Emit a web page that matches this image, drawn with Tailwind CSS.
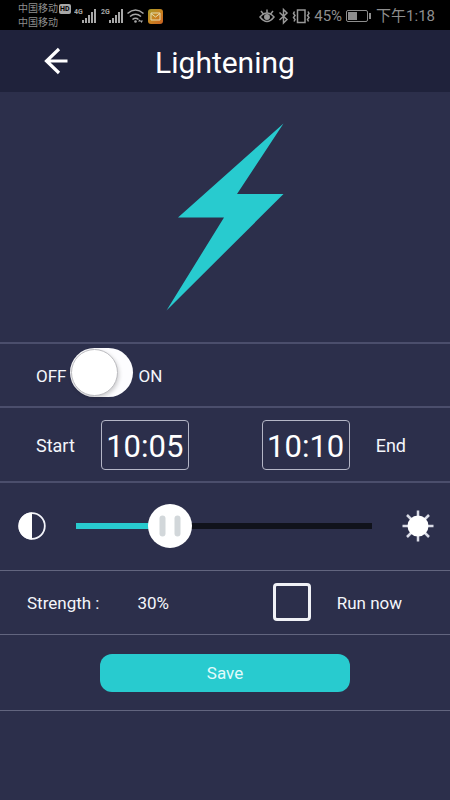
<!DOCTYPE html>
<html lang="en">
<head>
<meta charset="utf-8">
<meta name="viewport" content="width=device-width, initial-scale=1">
<title>Lightening</title>
<script src="https://cdn.jsdelivr.net/npm/@tailwindcss/browser@4"></script>
</head>
<body class="flex min-h-screen flex-col bg-[#2c2f4b] font-[Roboto,'Noto_Sans_CJK_SC',sans-serif] text-[17px] leading-6 text-[#f4f6fb]">

  <!-- Status bar -->
  <div class="flex h-[30px] items-center bg-black pt-[2px] pr-[15px] pl-[18px] text-[#8e8e8e]">
    <div class="text-[10px] leading-[14px]">
      <div class="flex items-center gap-px">
        <span>中国移动</span>
        <span class="rounded-[2px] bg-[#a8a8a8] px-px text-[7px] leading-[10px] font-bold text-black">HD</span>
      </div>
      <div>中国移动</div>
    </div>
    <svg class="ml-[3px] h-[18px] w-[80px]" viewBox="0 0 80 18" fill="#a8a8a8" aria-hidden="true">
      <text x="0" y="7" font-size="7" font-weight="700">4G</text>
      <path d="M8 13h2v3H8zM11 11h2v5h-2zM14 8h2v8h-2zM17 5h2v11h-2zM20 2h2v14h-2z"/>
      <text x="27" y="7" font-size="7" font-weight="700">2G</text>
      <path d="M35 13h2v3h-2zM38 11h2v5h-2zM41 8h2v8h-2zM44 5h2v11h-2zM47 2h2v14h-2z"/>
      <g fill="none" stroke="#a8a8a8" stroke-width="1.6">
        <path d="M53.500 6.500q8-7 16 0M56 9.500q5.500-4.500 11 0M58.500 12.500q3-2.500 6 0"/>
      </g>
      <circle cx="61.500" cy="14.500" r="1.300"/>
      <path d="M64 14.500l1.500-2 1.500 2zM66 13.500h3l-1.500 2.500z"/>
    </svg>
    <svg class="-ml-[6px] h-[15px] w-[15px]" viewBox="0 0 15 15" aria-hidden="true">
      <defs><linearGradient id="mail" x1="0" y1="0" x2="1" y2="1"><stop stop-color="#a39a2c"/><stop offset=".5" stop-color="#c98520"/><stop offset="1" stop-color="#c85f22"/></linearGradient></defs>
      <rect width="15" height="15" rx="3" fill="url(#mail)"/>
      <path d="M3 4h9v7H3zM3 4.500l4.500 3.500L12 4.500" fill="none" stroke="#e5dcae"/>
    </svg>
    <div class="ml-auto flex items-center">
      <svg class="mr-[2px] h-[18px] w-[53px]" viewBox="0 0 53 18" fill="none" stroke="#989898" stroke-width="1.500" aria-hidden="true">
        <path d="M1 10q7-8 14 0-7 9-14 0zM8 5.500V2.500M4 6.500L2 4M12 6.500l2-2.500"/>
        <circle cx="8" cy="10" r="2.200" fill="#989898"/>
        <path d="M20.500 5.500l7.500 7-3.500 3.500V2.500L28 6l-7.500 7"/>
        <path d="M38.500 3h7.500v12.500h-7.500z"/>
        <path d="M35.500 4.500l-1 2 1.500 2-1.500 2 1.500 2-1 2M49 4.500l1 2-1.500 2 1.500 2-1.500 2 1 2"/>
      </svg>
      <span class="text-[15px] leading-5">45%</span>
      <svg class="ml-[4px] h-[13px] w-[26px]" viewBox="0 0 26 13" fill="none" stroke="#8e8e8e" aria-hidden="true">
        <rect x=".5" y=".5" width="21" height="11" rx="1.500"/>
        <path d="M2 2h9v8H2z" fill="#8e8e8e" stroke="none"/>
        <path d="M24 3v6" stroke-width="2"/>
      </svg>
      <span class="ml-[4px] text-[15px] leading-5">下午1:18</span>
    </div>
  </div>

  <!-- Title bar -->
  <header class="grid h-[62px] grid-cols-[1fr_auto_1fr] items-center bg-[#1f223b]">
    <button type="button" aria-label="Back" class="ml-[42px] w-[28px]">
      <svg class="h-[28px] w-[28px]" viewBox="0 0 28 28" fill="none" stroke="#fff" stroke-width="3.200" aria-hidden="true">
        <path d="M25.500 14H4M17 2L4.500 14 17 26"/>
      </svg>
    </button>
    <h1 class="pt-[3px] text-[30px] leading-9 text-white">Lightening</h1>
  </header>

  <main class="border-b border-[#62657f]">
    <div class="flex h-[250px] items-center justify-center">
      <svg class="h-[188px] w-[118px]" viewBox="0 0 118 188" aria-hidden="true">
        <path d="M117.500 .5L12 94.500H58L.5 187.500 117.500 71H71z" fill="#28cbcf"/>
      </svg>
    </div>

    <section class="flex h-[64px] items-center gap-[6px] border-t-2 border-[#4b4e6c] pt-[2px] pl-[36px]">
      <span aria-hidden="true">OFF</span>
      <input type="checkbox" role="switch" aria-label="Lightening on or off" class="mt-[2px] -ml-[3px] h-[49px] w-[63px] appearance-none self-start rounded-full bg-[#fdfdff] p-px before:block before:h-[47px] before:w-[47px] before:rounded-full before:border before:border-[#bcbcc0] before:bg-white before:shadow-[1px_2px_4px_rgba(0,0,0,0.2)] checked:before:ml-[14px]">
      <span aria-hidden="true">ON</span>
    </section>

    <section class="flex h-[75px] items-center justify-between border-t-2 border-[#4b4e6c] pr-[44px] pl-[36px] text-[18px]">
      <div class="flex items-center gap-[26px]">
        <label for="start" class="pt-[2px]">Start</label>
        <input id="start" type="text" value="10:05" class="h-[50px] w-[88px] rounded-[4px] border border-[#b4b6c6] pt-[3px] text-center text-[31px] text-white">
      </div>
      <div class="flex flex-row-reverse items-center gap-[26px]">
        <label for="end" class="pt-[2px]">End</label>
        <input id="end" type="text" value="10:10" class="h-[50px] w-[88px] rounded-[4px] border border-[#b4b6c6] pt-[3px] text-center text-[31px] text-white">
      </div>
    </section>

    <section class="flex h-[89px] items-center border-t-2 border-[#4b4e6c] pr-[16px] pb-px pl-[18px]">
      <svg class="h-[28px] w-[28px]" viewBox="0 0 28 28" aria-hidden="true">
        <circle cx="14" cy="14" r="12.800" fill="none" stroke="#f4f5fa" stroke-width="1.800"/>
        <path d="M14 .5a13.500 13.500 0 0 0 0 27z" fill="#fff"/>
      </svg>
      <div class="relative mx-[30px] h-[44px] flex-1">
        <input id="strength" type="range" min="0" max="105" value="30" aria-label="Strength" class="block h-[44px] w-full appearance-none bg-[linear-gradient(to_right,#28cbcf_32%,#10121b_32%)] bg-[length:100%_6px] bg-center bg-no-repeat [&::-webkit-slider-thumb]:h-[44px] [&::-webkit-slider-thumb]:w-[44px] [&::-webkit-slider-thumb]:appearance-none [&::-webkit-slider-thumb]:rounded-full [&::-webkit-slider-thumb]:bg-white">
        <div class="pointer-events-none absolute inset-y-0 right-[44px] left-0">
          <svg class="absolute h-[44px] w-[44px]" style="left:28.57%" viewBox="0 0 44 44" aria-hidden="true">
            <rect x="11.500" y="11.500" width="6" height="21" rx="3" fill="#d2d7da"/>
            <rect x="26.500" y="11.500" width="6" height="21" rx="3" fill="#d2d7da"/>
          </svg>
        </div>
      </div>
      <svg class="h-[32px] w-[32px]" viewBox="0 0 32 32" stroke="#d9dbe6" stroke-width="2.500" aria-hidden="true">
        <path d="M16 .5V31.500M.5 16H31.500M5 5L27 27M27 5L5 27"/>
        <circle cx="16" cy="16" r="10.500" fill="#fff" stroke="none"/>
      </svg>
    </section>

    <section class="flex h-[64px] items-center justify-between border-t border-[#62657f] pr-[48px] pl-[27px]">
      <div class="flex items-center gap-[38px]">
        <label for="strength">Strength :</label>
        <output for="strength">30%</output>
      </div>
      <div class="flex items-center gap-[26px]">
        <input id="run" type="checkbox" class="mb-px h-[38px] w-[38px] appearance-none rounded-[4px] border-3 border-[#f0f1f6] checked:bg-[#28cbcf]">
        <label for="run">Run now</label>
      </div>
    </section>

    <section class="flex h-[76px] items-center justify-center border-t border-[#62657f] px-[100px]">
      <button type="button" class="h-[38px] w-full rounded-[12px] bg-[#28cbcf] text-[#e2fbfb]">Save</button>
    </section>
  </main>
</body>
</html>
